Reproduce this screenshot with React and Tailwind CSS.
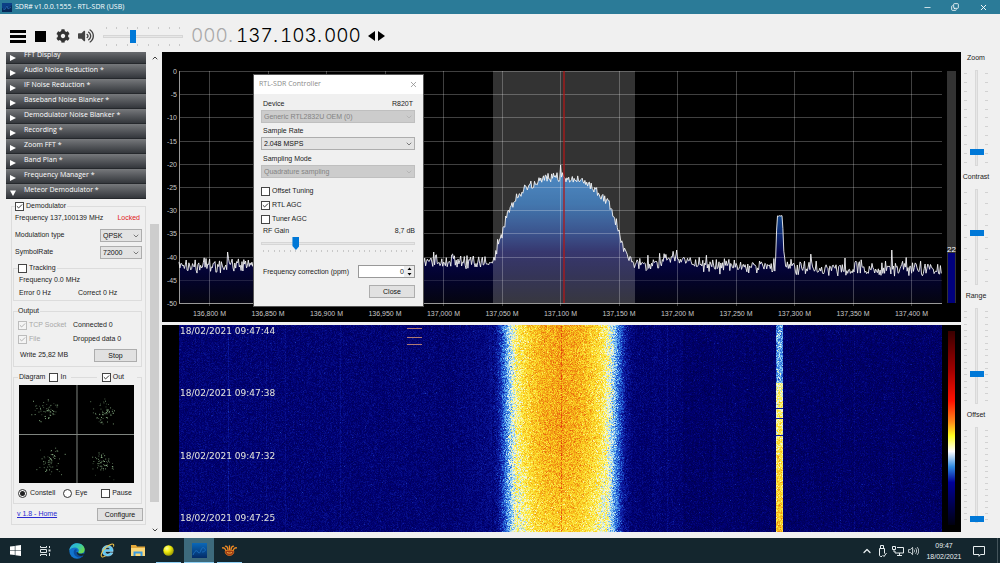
import React, { useLayoutEffect, useRef, useId } from "react";
import { ChevronDown, ChevronUp, X, Minus, Copy, Check as CheckMark } from "lucide-react";
import { FaCog, FaVolumeUp } from "react-icons/fa";

function seeded(seed) {
  let s = seed;
  return () => {
    s = (s * 1664525 + 1013904223) % 4294967296;
    return s / 4294967296;
  };
}

function interpolate(points, x) {
  if (x <= points[0][0]) return points[0][1];
  for (let i = 1; i < points.length; i++) {
    if (x <= points[i][0]) {
      const [x0, y0] = points[i - 1];
      const [x1, y1] = points[i];
      return y0 + ((y1 - y0) * (x - x0)) / (x1 - x0);
    }
  }
  return points[points.length - 1][1];
}

/* ---------- form controls ---------- */

function CheckBox({ label, checked, disabled }) {
  return (
    <label className={"flex h-3 items-center gap-[2px] " + (disabled ? "text-[#a8a8a8]" : "text-[#1c1c1c]")}>
      <span className="grid">
        <input
          type="checkbox"
          defaultChecked={checked}
          disabled={disabled}
          className="col-start-1 row-start-1 size-[9px] appearance-none border border-[#444] bg-white disabled:border-[#bcbcbc] disabled:bg-[#f4f4f4]"
        />
        {checked && <CheckMark className="pointer-events-none col-start-1 row-start-1 m-[1px] size-[7px]" strokeWidth={3} />}
      </span>
      {label}
    </label>
  );
}

function Radio({ label, checked }) {
  return (
    <label className="flex h-3 items-center gap-[3px]">
      <span className="grid place-items-center">
        <input
          type="radio"
          name="view"
          defaultChecked={checked}
          className="peer col-start-1 row-start-1 size-[9px] appearance-none rounded-full border border-[#333] bg-white"
        />
        <span className="pointer-events-none col-start-1 row-start-1 hidden size-[5px] rounded-full bg-[#222] peer-checked:block" />
      </span>
      {label}
    </label>
  );
}

function Select({ id, value, disabled, className, label }) {
  return (
    <span className={"grid items-center " + className}>
      <select
        id={id}
        aria-label={label}
        disabled={disabled}
        className="col-start-1 row-start-1 h-[13px] w-full appearance-none border border-[#adadad] bg-[#e3e3e3] pl-[2px] text-[7px] leading-[11px] text-[#111] disabled:border-[#bfbfbf] disabled:bg-[#cccccc] disabled:text-[#838383] disabled:opacity-100"
      >
        <option>{value}</option>
      </select>
      <ChevronDown
        className={"pointer-events-none col-start-1 row-start-1 mr-[2px] size-[8px] justify-self-end " + (disabled ? "text-[#aaa]" : "text-[#444]")}
        strokeWidth={2}
      />
    </span>
  );
}

function PushButton({ children, className }) {
  return (
    <button className={"h-[13px] border border-[#adadad] bg-[#e1e1e1] text-[7px] leading-[11px] text-[#111] " + className}>
      {children}
    </button>
  );
}

/* ---------- top bars ---------- */

function TitleBar() {
  return (
    <header className="flex h-[14px] items-center bg-[#2b7b98] pl-[2px] text-white">
      <svg viewBox="0 0 10 9" className="mr-[3px] h-[9px] w-[10px]">
        <rect width="10" height="9" fill="#0b3f86" />
        <path d="M0 9V5l3 1 2-4 1 3 4-3v7z" fill="#062859" />
        <path d="M1 6l2 .5L5 3l1 3 3-2" stroke="#2f78c8" strokeWidth=".6" fill="none" />
      </svg>
      <h1 className="flex-1 font-['Open_Sans',sans-serif] text-[7px] leading-[14px]">SDR# v1.0.0.1555 - RTL-SDR (USB)</h1>
      <div className="flex items-center pr-[3px]">
        <button aria-label="Minimize" className="grid w-7 place-items-center"><Minus className="size-[9px]" strokeWidth={2} /></button>
        <button aria-label="Restore" className="grid w-7 place-items-center"><Copy className="size-[8px] -scale-x-100 rotate-180" strokeWidth={2.5} /></button>
        <button aria-label="Close" className="grid w-7 place-items-center"><X className="size-[9px]" strokeWidth={2.5} /></button>
      </div>
    </header>
  );
}

function TickRow({ count, className }) {
  return (
    <div className={"flex justify-between " + className}>
      {Array.from({ length: count }, (_, i) => (
        <span key={i} className="h-[2px] w-px bg-[#c8c8c8]" />
      ))}
    </div>
  );
}

function Toolbar() {
  return (
    <div className="flex h-[38px] items-center pt-[6px] pl-[10px]">
      <button aria-label="Menu" className="flex w-4 flex-col gap-[2px]">
        <span className="h-[3px] w-full bg-black" />
        <span className="h-[3px] w-full bg-black" />
        <span className="h-[3px] w-full bg-black" />
      </button>
      <button aria-label="Stop" className="ml-[9px] size-[11px] bg-black" />
      <button aria-label="Settings" className="ml-[10px]"><FaCog className="size-[14px] text-[#333]" /></button>
      <button aria-label="Mute" className="ml-2"><FaVolumeUp className="size-[16px] text-[#444]" /></button>
      <div className="ml-[9px] flex w-20 flex-col gap-px">
        <TickRow count={8} className="px-[3px]" />
        <input
          type="range"
          aria-label="Volume"
          defaultValue={36}
          className="h-[13px] w-full appearance-none bg-transparent [&::-webkit-slider-runnable-track]:h-[3px] [&::-webkit-slider-runnable-track]:border [&::-webkit-slider-runnable-track]:border-[#d6d6d6] [&::-webkit-slider-runnable-track]:bg-[#e7e7e7] [&::-webkit-slider-thumb]:-mt-[6px] [&::-webkit-slider-thumb]:h-[13px] [&::-webkit-slider-thumb]:w-[6px] [&::-webkit-slider-thumb]:appearance-none [&::-webkit-slider-thumb]:bg-[#0078d7]"
        />
        <TickRow count={8} className="px-[3px]" />
      </div>
      <output className="ml-2 flex font-[Inter,sans-serif] text-[19px] leading-[20px] font-light text-black tabular-nums">
        <span className="w-[45px] text-[#a9a9a9]">000.</span>
        <span className="w-[44px]">137.</span>
        <span className="w-[44px]">103.</span>
        <span className="w-[38px]">000</span>
      </output>
      <div className="ml-[6px] flex gap-[3px]">
        <button aria-label="Previous"><svg viewBox="0 0 7 10" className="h-[10px] w-[7px]"><path d="M7 0v10L0 5z" /></svg></button>
        <button aria-label="Next"><svg viewBox="0 0 7 10" className="h-[10px] w-[7px]"><path d="M0 0v10l7-5z" /></svg></button>
      </div>
    </div>
  );
}

/* ---------- left panel ---------- */

const SECTIONS = [
  "FFT Display", "Audio Noise Reduction *", "IF Noise Reduction *", "Baseband Noise Blanker *",
  "Demodulator Noise Blanker *", "Recording *", "Zoom FFT *", "Band Plan *", "Frequency Manager *", "Meteor Demodulator *",
];

function SectionHeader({ title, open }) {
  return (
    <button className="flex h-[15px] w-full items-center border-b border-[#25282c] bg-linear-to-b from-[#77797c] to-[#34373c] pb-px pl-[4px] text-left font-['Open_Sans',sans-serif] text-[7px] font-medium text-white">
      <svg viewBox="0 0 6 6" className="mt-[4px] mr-[8px] size-[6px] fill-white">
        <path d={open ? "M0 .5h6L3 6z" : "M0 0v6l6-3z"} />
      </svg>
      {title}
    </button>
  );
}

const CLUSTERS = [[27, 25], [85, 26], [31, 78], [84, 78]];

function Constellation() {
  const rnd = seeded(11);
  const dots = CLUSTERS.flatMap(([cx, cy]) =>
    Array.from({ length: 60 }, () => [
      cx + (rnd() + rnd() + rnd() - 1.5) * 12,
      cy + (rnd() + rnd() + rnd() - 1.5) * 12,
      rnd(),
    ])
  );
  return (
    <div className="mt-[2px] mr-[3px] ml-px">
      <svg viewBox="0 0 116 98" preserveAspectRatio="none" className="h-[98px] w-full bg-black">
        <path d="M58.500 0V98M0 49.500H116" stroke="#808580" strokeWidth="1" />
        {dots.map(([x, y, a], i) => (
          <rect key={i} x={x} y={y} width=".9" height=".9" fill="#b5eab0" opacity={0.3 + a * 0.6} />
        ))}
      </svg>
    </div>
  );
}

function MeteorPanel() {
  return (
    <fieldset className="mt-px ml-[5px] border border-[#dcdcdc] pr-[2px] pb-[3px] pl-px">
      <legend className="ml-[2px] bg-[#f0f0f0] pr-px"><CheckBox label="Demodulator" checked /></legend>
      <div className="flex h-3 items-center justify-between pr-[3px] pl-[2px]">
        <span>Frequency 137,100139 MHz</span>
        <span className="text-[#e02020]">Locked</span>
      </div>
      <div className="mt-[5px] flex items-center justify-between pr-px pl-[2px]">
        <label htmlFor="modulation">Modulation type</label>
        <Select id="modulation" value="QPSK" className="w-[42px]" />
      </div>
      <div className="mt-[4px] flex items-center justify-between pr-px pl-[2px]">
        <label htmlFor="symbolrate">SymbolRate</label>
        <Select id="symbolrate" value="72000" className="w-[42px]" />
      </div>

      <fieldset className="mt-[3px] mr-px border border-[#dcdcdc] px-1 pb-px">
        <legend className="bg-[#f0f0f0] pr-px"><CheckBox label="Tracking" /></legend>
        <p className="h-3 pl-px leading-3">Frequency 0.0 MHz</p>
        <div className="mt-px flex h-3 pl-px leading-3">
          <span className="w-[59px]">Error 0 Hz</span>
          <span>Correct 0 Hz</span>
        </div>
      </fieldset>

      <fieldset className="mt-[4px] mr-px border border-[#dcdcdc] px-1 pb-1">
        <legend className="h-3 bg-[#f0f0f0] pr-px leading-3">Output</legend>
        <div className="mt-[2px] flex h-3 items-center">
          <span className="w-[55px]"><CheckBox label="TCP Socket" checked disabled /></span>
          <span>Connected 0</span>
        </div>
        <div className="mt-[2px] flex h-3 items-center">
          <span className="w-[55px]"><CheckBox label="File" checked disabled /></span>
          <span>Dropped data 0</span>
        </div>
        <div className="mt-[4px] flex items-center justify-between pl-[2px]">
          <span>Write 25,82 MB</span>
          <PushButton className="w-[43px]">Stop</PushButton>
        </div>
      </fieldset>

      <fieldset className="mt-[4px] mr-px border border-[#dcdcdc] px-1 pb-1">
        <legend className="flex w-full items-center bg-[#f0f0f0] pl-px">
          <span className="mr-[4px]">Diagram</span>
          <CheckBox label="In" />
          <span className="mx-[5px] h-px flex-1 bg-[#dcdcdc]" />
          <span className="mr-[13px]"><CheckBox label="Out" checked /></span>
        </legend>
        <Constellation />
        <div className="mt-[4px] flex items-center">
          <span className="mr-[8px]"><Radio label="Constell" checked /></span>
          <Radio label="Eye" />
          <span className="mr-[5px] ml-auto"><CheckBox label="Pause" /></span>
        </div>
      </fieldset>

      <div className="mt-[4px] flex items-center justify-between pl-[4px]">
        <a href="#home" className="text-[#2a2ad0] underline">v 1.8 - Home</a>
        <PushButton className="w-[46px]">Configure</PushButton>
      </div>
    </fieldset>
  );
}

function SidePanel() {
  return (
    <aside className="flex w-[162px] shrink-0 pl-[6px]">
      <div className="h-[480px] w-[140px] overflow-hidden">
        <div className="-mt-[3px]">
          {SECTIONS.map((title, i) => (
            <SectionHeader key={title} title={title} open={i === SECTIONS.length - 1} />
          ))}
          <MeteorPanel />
        </div>
      </div>
      <div className="ml-[4px] flex w-[9px] flex-col items-center pt-[2px]">
        <ChevronUp className="size-[8px]" strokeWidth={2.5} />
        <span className="mt-[162px] h-[278px] w-full bg-[#cdcdcd]" />
        <span className="flex flex-1 items-center"><ChevronDown className="mt-[19px] size-[8px]" strokeWidth={2.5} /></span>
      </div>
    </aside>
  );
}

/* ---------- spectrum ---------- */

const ENVELOPE = [
  [17, 214], [60, 213], [255, 212], [270, 210], [290, 209], [315, 211], [328, 210], [333, 205], [336, 190], [341, 181],
  [346, 161], [355, 146], [360, 138], [368, 134], [378, 130], [388, 126], [398, 125], [411, 127], [428, 134],
  [436, 141], [445, 150], [451, 161], [457, 180], [461, 195], [468, 206], [471, 211], [490, 213], [500, 208],
  [512, 206], [524, 209], [545, 214], [613, 215], [614, 200], [615, 164], [620, 164], [621, 178], [622, 205], [624, 215], [780, 217],
];

function buildTrace() {
  const rnd = seeded(77);
  const pts = [];
  for (let x = 17; x <= 780; x += 0.9) {
    const base = interpolate(ENVELOPE, x);
    const inside = x > 333 && x < 470;
    const peak = x > 613.5 && x < 622;
    const amp = peak ? 1 : inside ? 8 : 11;
    let y = base + (rnd() + rnd() - 1) * amp * 0.8;
    if (!inside && !peak && rnd() > 0.97) y -= 5;
    pts.push([x, y]);
  }
  const spikes = [[66, 200], [398.5, 113], [272, 200], [515, 198], [730, 198], [683, 206]];
  spikes.forEach(([sx, sy]) => {
    const i = Math.round((sx - 17) / 0.9);
    pts[i] = [pts[i][0], sy];
  });
  return pts.map(([x, y]) => x.toFixed(1) + "," + y.toFixed(1)).join(" ");
}

const TRACE = buildTrace();
const FREQS = ["136,800", "136,850", "136,900", "136,950", "137,000", "137,050", "137,100", "137,150", "137,200", "137,250", "137,300", "137,350", "137,400"];

function Spectrum() {
  const gid = useId();
  return (
    <svg viewBox="0 0 799 270" className="block w-full bg-black font-['Liberation_Sans',Arial,sans-serif]" fontSize="7" fill="#c8c8c8">
      <defs>
        <linearGradient id={gid} gradientUnits="userSpaceOnUse" x1="0" y1="110" x2="0" y2="251">
          <stop offset="0" stopColor="#2774bd" />
          <stop offset=".3" stopColor="#14559a" />
          <stop offset=".5" stopColor="#0b2a72" />
          <stop offset=".64" stopColor="#05054a" />
          <stop offset=".8" stopColor="#030330" />
          <stop offset="1" stopColor="#050510" />
        </linearGradient>
      </defs>
      <polygon points={"17,251 " + TRACE + " 780,251"} fill={"url(#" + gid + ")"} />
      {FREQS.map((f, i) => (
        <g key={f}>
          <path d={`M${Math.round(47 + 58.5 * i) + 0.5} 19V254`} stroke="#fff" strokeOpacity=".25" />
          <text x={47.5 + 58.5 * i} y="264" textAnchor="middle">{f} M</text>
        </g>
      ))}
      {Array.from({ length: 11 }, (_, i) => (
        <g key={i}>
          <path d={`M17 ${Math.round(19 + 23.2 * i) + 0.5}H780`} stroke="#fff" strokeOpacity={i === 10 ? ".6" : i === 9 ? ".12" : ".25"} />
          <text x="15" y={22 + 23.2 * i} textAnchor="end">{i === 0 ? "0" : -5 * i}</text>
        </g>
      ))}
      <path d="M17.500 19V251" stroke="#999" />
      <polyline points={TRACE} fill="none" stroke="#f4f4f4" strokeWidth=".9" />
      <rect x="331" y="19" width="142" height="232" fill="#fff" fillOpacity=".2" />
      <rect x="401" y="19" width="2" height="232" fill="#b01818" fillOpacity=".65" />
      <rect x="785" y="19" width="9" height="232" fill="#333" />
      <rect x="786" y="201" width="7" height="50" fill="#00007c" />
      <text x="789.500" y="200" textAnchor="middle" fontSize="8" fill="#fff">22</text>
    </svg>
  );
}

/* ---------- waterfall ---------- */

const PALETTE = [
  [0, [0, 0, 68]], [0.15, [0, 0, 112]], [0.3, [14, 30, 165]], [0.42, [40, 110, 220]], [0.52, [130, 200, 245]],
  [0.6, [245, 248, 225]], [0.67, [252, 240, 85]], [0.76, [250, 208, 32]], [0.86, [240, 145, 20]], [1, [225, 60, 12]],
];
const PALETTE_CHANNELS = [0, 1, 2].map((c) => PALETTE.map(([v, rgb]) => [v, rgb[c]]));
const BAND = [[0, 0.83], [18, 0.81], [30, 0.76], [40, 0.7], [47, 0.63], [53, 0.53], [60, 0.37], [66, 0.23], [74, 0.16], [110, 0.12]];

function paintWaterfall(canvas) {
  const ctx = canvas.getContext("2d");
  const w = canvas.width;
  const h = canvas.height;
  const rnd = seeded(5);
  const img = ctx.createImageData(w, h);
  const columns = Array.from({ length: w }, () => (rnd() + rnd() - 1) * 0.015);
  [[66, 0.09], [104, 0.05], [123, 0.04], [178, 0.06], [505, 0.05], [552, 0.03], [570, 0.03], [678, 0.03], [692, 0.05], [730, 0.04]].forEach(([x, a]) => {
    columns[x] += a;
  });
  for (let y = 0; y < h; y++) {
    const t = y / h;
    for (let x = 0; x < w; x++) {
      const o = (y * w + x) * 4;
      img.data[o + 3] = 255;
      if (x < 17 || x >= 780) continue;
      const d = Math.abs(x - 399) * (1 + 0.05 * t);
      let v = interpolate(BAND, d);
      const n = rnd() + rnd() + rnd() - 1.5;
      if (d < 70) {
        v += n * 0.11;
        if (d < 45) v -= Math.max(0, t - 0.55) * 0.16;
        if (x === 399 && rnd() > 0.35) v += 0.12;
      } else {
        v += n * 0.08 + columns[x];
        if (x < 330) v += 0.035;
        if (Math.abs(x - 505) < 16) v += 0.025;
        if (rnd() > 0.992) v += 0.1;
      }
      if (x >= 614 && x <= 620) {
        v = (t < 0.28 ? 0.49 : interpolate([[0.28, 0.64], [0.6, 0.7], [1, 0.8]], t)) + n * 0.11;
        if (x === 614 || x === 620) v -= 0.04;
        if (y === 83 || y === 93 || y === 110) v = 0.3;
      }
      for (let c = 0; c < 3; c++) img.data[o + c] = interpolate(PALETTE_CHANNELS[c], v);
    }
  }
  ctx.putImageData(img, 0, 0);
  ctx.fillStyle = "#b07a72";
  [3, 12, 19].forEach((y) => ctx.fillRect(245, y, 15, 1));
  const bar = ctx.createLinearGradient(0, 6, 0, 200);
  [[0, "#3a0000"], [0.2, "#a00000"], [0.36, "#ff1000"], [0.47, "#ff8c1a"], [0.54, "#ffff20"], [0.62, "#ffffff"], [0.7, "#2f8be0"], [0.78, "#000098"], [1, "#000010"]].forEach(([p, c]) => bar.addColorStop(p, c));
  ctx.fillStyle = bar;
  ctx.fillRect(786, 6, 7, 194);
}

function Waterfall() {
  const ref = useRef(null);
  useLayoutEffect(() => paintWaterfall(ref.current), []);
  return (
    <div className="relative h-[207px]">
      <canvas ref={ref} width={799} height={207} className="block h-full w-full bg-black" />
      <div className="absolute inset-0 flex flex-col justify-between pb-[8px] pl-[18px] font-['DejaVu_Sans',Verdana,sans-serif] text-[9px] leading-3 text-[#e6e6dc]">
        <time>18/02/2021 09:47:44</time>
        <time>18/02/2021 09:47:38</time>
        <time>18/02/2021 09:47:32</time>
        <time>18/02/2021 09:47:25</time>
      </div>
    </div>
  );
}

/* ---------- right sliders ---------- */

function TickColumn({ count }) {
  return (
    <div className="flex flex-col justify-between py-[3px]">
      {Array.from({ length: count }, (_, i) => (
        <span key={i} className="h-px w-[3px] bg-[#d2d2d2]" />
      ))}
    </div>
  );
}

function VerticalSlider({ label, value, ticks }) {
  return (
    <label className="flex h-[119px] flex-col items-center gap-[6px]">
      <span className="h-3 leading-3">{label}</span>
      <span className="flex h-[96px] gap-[2px]">
        <TickColumn count={ticks} />
        <input
          type="range"
          defaultValue={value}
          className="h-full w-[14px] appearance-none bg-transparent [direction:rtl] [writing-mode:vertical-lr] [&::-webkit-slider-runnable-track]:w-[3px] [&::-webkit-slider-runnable-track]:border [&::-webkit-slider-runnable-track]:border-[#d9d9d9] [&::-webkit-slider-runnable-track]:bg-[#e7e7e7] [&::-webkit-slider-thumb]:-ml-[6px] [&::-webkit-slider-thumb]:h-[6px] [&::-webkit-slider-thumb]:w-[14px] [&::-webkit-slider-thumb]:appearance-none [&::-webkit-slider-thumb]:bg-[#0078d7]"
        />
        <TickColumn count={ticks} />
      </span>
    </label>
  );
}

/* ---------- dialog ---------- */

function ControllerDialog() {
  return (
    <div role="dialog" aria-label="RTL-SDR Controller" className="absolute top-[75px] left-[254px] w-[169px] bg-[#f0f0f0] shadow-[0_0_0_1px_#555]">
      <div className="flex h-[19px] items-center justify-between bg-white pr-[5px] pl-[5px]">
        <h2 className="font-['Open_Sans',sans-serif] text-[7px] text-[#8a8a8a]">RTL-SDR Controller</h2>
        <button aria-label="Close dialog"><X className="size-[9px] text-[#888]" strokeWidth={2} /></button>
      </div>
      <div className="flex flex-col pt-[4px] pr-2 pb-[8px] pl-[7px] leading-3">
        <div className="flex justify-between px-[2px]">
          <label htmlFor="device">Device</label>
          <span>R820T</span>
        </div>
        <Select id="device" value="Generic RTL2832U OEM (0)" disabled className="w-full" />
        <label htmlFor="rate" className="mt-[2px] pl-[2px]">Sample Rate</label>
        <Select id="rate" value="2.048 MSPS" className="w-full" />
        <label htmlFor="mode" className="mt-[3px] pl-[2px]">Sampling Mode</label>
        <Select id="mode" value="Quadrature sampling" disabled className="w-full" />
        <div className="mt-[7px] flex flex-col gap-[2px]">
          <CheckBox label="Offset Tuning" />
          <CheckBox label="RTL AGC" checked />
          <CheckBox label="Tuner AGC" />
        </div>
        <div className="flex justify-between pr-0 pl-[2px]">
          <label htmlFor="gain">RF Gain</label>
          <span>8,7 dB</span>
        </div>
        <input
          id="gain"
          type="range"
          defaultValue={21}
          className="h-[13px] w-full appearance-none bg-transparent [&::-webkit-slider-runnable-track]:h-[3px] [&::-webkit-slider-runnable-track]:border [&::-webkit-slider-runnable-track]:border-[#d6d6d6] [&::-webkit-slider-runnable-track]:bg-[#e7e7e7] [&::-webkit-slider-thumb]:-mt-[6px] [&::-webkit-slider-thumb]:h-[13px] [&::-webkit-slider-thumb]:w-[7px] [&::-webkit-slider-thumb]:appearance-none [&::-webkit-slider-thumb]:bg-[#0078d7] [&::-webkit-slider-thumb]:[clip-path:polygon(0_0,100%_0,100%_70%,50%_100%,0_70%)]"
        />
        <TickRow count={29} className="px-[2px]" />
        <div className="mt-[13px] flex items-center justify-between pl-[2px]">
          <label htmlFor="ppm">Frequency correction (ppm)</label>
          <span className="flex h-[13px] w-[57px] items-center border border-[#999] bg-white">
            <input id="ppm" type="text" defaultValue="0" className="h-[11px] min-w-0 flex-1 text-right text-[7px]" />
            <span className="flex h-full w-[10px] flex-col items-center justify-between bg-[#ececec] py-px">
              <svg viewBox="0 0 5 9" className="h-[9px] w-[5px]"><path d="M.5 3L2.500 .5 4.500 3zM.5 6L2.500 8.500 4.500 6z" /></svg>
            </span>
          </span>
        </div>
        <PushButton className="mt-[7px] w-[46px] self-end">Close</PushButton>
      </div>
    </div>
  );
}

/* ---------- taskbar ---------- */

function TaskIcon({ label, children, state }) {
  return (
    <button
      aria-label={label}
      className={"relative grid place-items-center " + (state === "active" ? "bg-[#3d6a7c]" : "")}
    >
      {children}
      {state && <span className={"absolute bottom-0 h-px bg-[#8fd0f5] " + (state === "active" ? "inset-x-0" : "inset-x-[3px]")} />}
    </button>
  );
}

function Taskbar() {
  return (
    <footer className="flex h-[25px] items-stretch justify-between bg-[#14262e] text-[#e8eef0]">
      <nav className="grid w-[245px] grid-cols-8">
        <TaskIcon label="Start">
          <svg viewBox="0 0 11 11" className="size-[11px] fill-white"><path d="M0 1.600l4.800-.7v4.300H0zM5.400.8L11 0v5.200H5.400zM0 5.800h4.800v4.300L0 9.400zM5.400 5.800H11V11l-5.600-.8z" /></svg>
        </TaskIcon>
        <TaskIcon label="Task view">
          <svg viewBox="0 0 11 10" className="h-[10px] w-[11px]" fill="none" stroke="#dfe6e8" strokeWidth="1"><path d="M.5 0v1.500h6V0M.5 10V8.500h6V10M.5 3.500h6v3h-6zM9.500 0v2M9.500 7v3" /><rect x="8.500" y="3.500" width="2" height="2" fill="#dfe6e8" stroke="none" /></svg>
        </TaskIcon>
        <TaskIcon label="Edge">
          <svg viewBox="0 0 16 16" className="size-[16px]">
            <defs>
              <linearGradient id="edge-a" x1="0" y1="0" x2="1" y2=".6"><stop offset="0" stopColor="#2aa5e8" /><stop offset=".55" stopColor="#32c6b8" /><stop offset="1" stopColor="#6bdc4e" /></linearGradient>
            </defs>
            <circle cx="8" cy="8" r="7.700" fill="#1173cc" />
            <path d="M.3 7.500C.9 3 4.200.3 8.200.3c4.400 0 7.500 3 7.500 6.200 0 2.500-1.900 4-4 4-1.700 0-2.600-.6-2.600-1.200 0-.4.7-.7.7-1.900 0-1.500-1.500-2.900-3.800-2.900C3.500 4.500 1.300 5.700.3 7.500z" fill="url(#edge-a)" />
            <path d="M5.800 6.600C4 8 4.200 12.500 8.500 14.200c2.400.9 4.600 0 5.900-1.700-3.400 1.300-7.200-.3-7.200-3.400 0-1 .3-1.600.9-2.100-.6-.8-1.500-.9-2.300-.4z" fill="#0b4da0" />
            <path d="M9.100 9.300c0 1.600 2.700 2 5.100.9l1 .7-.9 1.700c-3 1.200-6.900-.4-6.900-3.400z" fill="#14262e" />
          </svg>
        </TaskIcon>
        <TaskIcon label="Internet Explorer">
          <svg viewBox="0 0 16 16" className="size-[15px]">
            <path d="M14 9H5.600c.2 3.200 4.300 3.500 5 1.500h3.200C12.400 15.400 2.300 15.600 2.300 8.200 2.300.8 14.600.4 14 9zM5.700 6.800h4.900c-.2-2.700-4.600-2.700-4.900 0z" fill="#5cc8f5" stroke="#d2f1fd" strokeWidth=".5" />
            <path d="M2 14.600C-.8 12.700 5 3.500 12 1.300c2.300-.7 3.200.4 2.300 2.600M2 14.600c1 .6 2.600 0 4-.9" fill="none" stroke="#f3c64a" strokeWidth="1.100" />
          </svg>
        </TaskIcon>
        <TaskIcon label="File Explorer">
          <svg viewBox="0 0 14 11" className="h-[11px] w-[14px]"><path d="M0 0h5l1 1.500h8V11H0z" fill="#e3a83a" /><path d="M0 3h14v8H0z" fill="#fbd778" /><path d="M2.500 11V6.500h9V11h-2V8.500h-5V11z" fill="#3c9be0" /></svg>
        </TaskIcon>
        <TaskIcon label="Tracker" state="open">
          <svg viewBox="0 0 12 12" className="size-[11px]"><defs><radialGradient id="ball" cx=".35" cy=".3" r=".8"><stop offset="0" stopColor="#ffffa0" /><stop offset=".4" stopColor="#f2ef10" /><stop offset="1" stopColor="#8c8a00" /></radialGradient></defs><circle cx="6" cy="6" r="5.700" fill="url(#ball)" /></svg>
        </TaskIcon>
        <TaskIcon label="SDR#" state="active">
          <svg viewBox="0 0 15 15" className="size-[15px]"><defs><linearGradient id="sdr" x1="0" y1="0" x2="0" y2="1"><stop offset="0" stopColor="#0a68b8" /><stop offset="1" stopColor="#042c68" /></linearGradient></defs><rect width="15" height="15" fill="url(#sdr)" /><path d="M1 12c2-5 4-5 5-3s2 1 3-2 3-3 4-1-1 3-3 3" fill="none" stroke="#1f74c4" strokeWidth=".8" /></svg>
        </TaskIcon>
        <TaskIcon label="Satellite decoder" state="open">
          <svg viewBox="0 0 15 12" className="h-[12px] w-[15px]">
            <path d="M3.500 5.500h8c1 2.500-.8 5-4 5s-5-2.500-4-5z" fill="#a03a14" stroke="#e0761e" strokeWidth=".8" />
            <path d="M0 3c1.500-.6 3 .2 4 2.400M15 3c-1.500-.6-3 .2-4 2.400M3.500 1.200c1.500 0 2.300 1.300 2.500 3.500M11.500 1.200c-1.500 0-2.300 1.300-2.500 3.500M7.500.8v3.600" fill="none" stroke="#ee8a24" strokeWidth="1.300" strokeLinecap="round" />
            <path d="M5 7.500c1.500.8 3.500.8 5 0" fill="none" stroke="#f6c04a" strokeWidth=".9" />
          </svg>
        </TaskIcon>
      </nav>
      <div className="flex items-center">
        <ChevronUp className="size-[12px]" strokeWidth={2.5} />
        <svg viewBox="0 0 9 12" className="ml-[5px] h-[12px] w-[9px]" fill="none" stroke="currentColor"><path d="M2.500 3V.5h3V3M1.500 3.500h5v5M1.500 3.500V10c0 1 .5 1.500 1.500 1.500h1" /><path d="M4.500 10l1.500 1.500L8.500 8" /></svg>
        <svg viewBox="0 0 12 10" className="ml-[5px] h-[10px] w-[12px]" fill="none" stroke="currentColor"><path d="M5 1.500h6.500v5.500H3V5M5 9.500h5M7.500 7v2.500M.5.500h3v3h-3zM2 3.500V6" /></svg>
        <svg viewBox="0 0 12 10" className="ml-[4px] h-[10px] w-[11px]" fill="none" stroke="currentColor" strokeWidth=".9"><path d="M.5 3.500h2L5 1v8L2.500 6.500h-2zM6.500 3.500c.8 1 .8 2 0 3M8.300 2c1.500 2 1.500 4 0 6M10 .8c2.200 2.800 2.200 5.600 0 8.400" /></svg>
        <div className="ml-[6px] w-[38px] text-center font-['Liberation_Sans',Arial,sans-serif] text-[7px] leading-[11px]">
          <div>09:47</div>
          <div>18/02/2021</div>
        </div>
        <svg viewBox="0 0 12 12" className="mr-[12px] ml-[10px] size-[12px]" fill="none" stroke="currentColor"><path d="M.5 1.500h11v8H7.500L6 11.300V9.500H.5z" /></svg>
        <span className="mr-[2px] h-full w-px bg-[#44545b]" />
      </div>
    </footer>
  );
}

export default function App() {
  return (
    <div className="relative flex min-h-screen flex-col bg-[#f0f0f0] font-['Liberation_Sans',Arial,sans-serif] text-[7px] text-[#1c1c1c]">
      <TitleBar />
      <Toolbar />
      <main className="flex flex-1">
        <SidePanel />
        <section className="flex min-w-0 flex-1 flex-col gap-[3px]">
          <Spectrum />
          <Waterfall />
        </section>
        <aside className="flex w-[39px] shrink-0 flex-col pr-[9px]">
          <VerticalSlider label="Zoom" value={11} ticks={11} />
          <VerticalSlider label="Contrast" value={55} ticks={9} />
          <VerticalSlider label="Range" value={30} ticks={15} />
          <VerticalSlider label="Offset" value={0} ticks={16} />
        </aside>
      </main>
      <Taskbar />
      <ControllerDialog />
    </div>
  );
}
